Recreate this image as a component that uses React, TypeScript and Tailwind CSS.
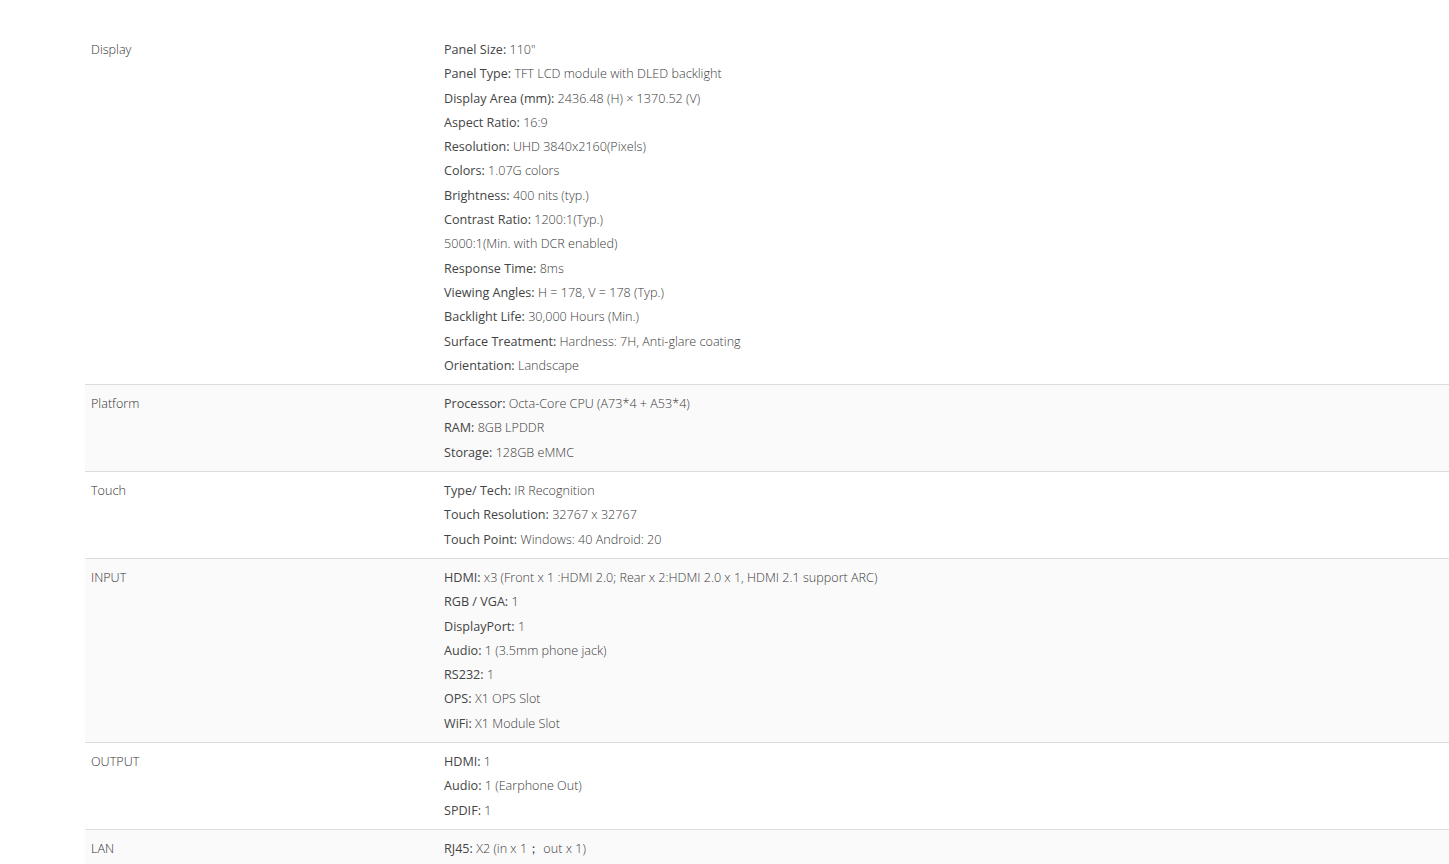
type Spec = { label?: string; value: string }
type Row = { name: string; specs: Spec[] }

const rows: Row[] = [
  {
    name: 'Display',
    specs: [
      { label: 'Panel Size:', value: '110"' },
      { label: 'Panel Type:', value: 'TFT LCD module with DLED backlight' },
      { label: 'Display Area (mm):', value: '2436.48 (H) × 1370.52 (V)' },
      { label: 'Aspect Ratio:', value: '16:9' },
      { label: 'Resolution:', value: 'UHD 3840x2160(Pixels)' },
      { label: 'Colors:', value: '1.07G colors' },
      { label: 'Brightness:', value: '400 nits (typ.)' },
      { label: 'Contrast Ratio:', value: '1200:1(Typ.)' },
      { value: '5000:1(Min. with DCR enabled)' },
      { label: 'Response Time:', value: '8ms' },
      { label: 'Viewing Angles:', value: 'H = 178, V = 178 (Typ.)' },
      { label: 'Backlight Life:', value: '30,000 Hours (Min.)' },
      { label: 'Surface Treatment:', value: 'Hardness: 7H, Anti-glare coating' },
      { label: 'Orientation:', value: 'Landscape' },
    ],
  },
  {
    name: 'Platform',
    specs: [
      { label: 'Processor:', value: 'Octa-Core CPU (A73*4 + A53*4)' },
      { label: 'RAM:', value: '8GB LPDDR' },
      { label: 'Storage:', value: '128GB eMMC' },
    ],
  },
  {
    name: 'Touch',
    specs: [
      { label: 'Type/ Tech:', value: 'IR Recognition' },
      { label: 'Touch Resolution:', value: '32767 x 32767' },
      { label: 'Touch Point:', value: 'Windows: 40 Android: 20' },
    ],
  },
  {
    name: 'INPUT',
    specs: [
      { label: 'HDMI:', value: 'x3 (Front x 1 :HDMI 2.0; Rear x 2:HDMI 2.0 x 1, HDMI 2.1 support ARC)' },
      { label: 'RGB / VGA:', value: '1' },
      { label: 'DisplayPort:', value: '1' },
      { label: 'Audio:', value: '1 (3.5mm phone jack)' },
      { label: 'RS232:', value: '1' },
      { label: 'OPS:', value: 'X1 OPS Slot' },
      { label: 'WiFi:', value: 'X1 Module Slot' },
    ],
  },
  {
    name: 'OUTPUT',
    specs: [
      { label: 'HDMI:', value: '1' },
      { label: 'Audio:', value: '1 (Earphone Out)' },
      { label: 'SPDIF:', value: '1' },
    ],
  },
  {
    name: 'LAN',
    specs: [{ label: 'RJ45:', value: 'X2 (in x 1； out x 1)' }],
  },
]

export default function App() {
  return (
    <div className="min-h-screen bg-white pt-[31px] pl-[85px] overflow-hidden font-['Open_Sans',sans-serif] text-[12.6px] leading-[24.3px]">
      <div className="w-[1380px]">
        {rows.map((row, i) => (
          <div
            key={row.name}
            className={`flex border-b border-[#dddddd] pt-[7px] pb-[6px] ${i % 2 === 1 ? 'bg-[#fafafa]' : 'bg-white'}`}
          >
            <div className="w-[353px] shrink-0 pl-[6px] font-light text-[#333]">{row.name}</div>
            <div className="flex-1 pl-[6px]">
              {row.specs.map((s, j) => (
                <p key={j} className="font-light text-[#3a3a3a]">
                  {s.label && <span className="font-normal text-[#444]">{s.label} </span>}
                  {s.value}
                </p>
              ))}
            </div>
          </div>
        ))}
      </div>
    </div>
  )
}
